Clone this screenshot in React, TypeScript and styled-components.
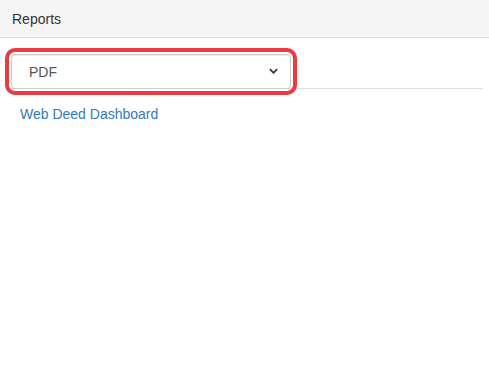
import React from "react";
import styled, { createGlobalStyle } from "styled-components";

const GlobalStyle = createGlobalStyle`
  body {
    margin: 0;
    background: #fff;
    font-family: "Liberation Sans", Arial, sans-serif;
    font-size: 14px;
    color: #333;
  }
`;

const App = () => {
  const [format, setFormat] = React.useState("PDF");

  return (
    <>
      <GlobalStyle />
      <Panel>
        <Heading>Reports</Heading>
        <Body>
          <FilterBar>
            <Highlight>
              <Select value={format} onChange={(e) => setFormat(e.target.value)}>
                <option>PDF</option>
                <option>Excel</option>
                <option>CSV</option>
              </Select>
              <Chevron viewBox="0 0 10 6" aria-hidden="true">
                <path d="M1 1 L5 5 L9 1" />
              </Chevron>
            </Highlight>
          </FilterBar>
          <ReportList>
            <ReportLink href="#">Web Deed Dashboard</ReportLink>
          </ReportList>
        </Body>
      </Panel>
    </>
  );
};

const Panel = styled.div`
  display: flex;
  flex-direction: column;
  min-height: 373px;
`;

const Heading = styled.div`
  height: 38px;
  box-sizing: border-box;
  padding: 0 12px;
  display: flex;
  align-items: center;
  background: #f5f5f5;
  border-bottom: 1px solid #ddd;
  color: #333;
`;

const Body = styled.div`
  padding: 16px 6px 0 11px;
`;

const FilterBar = styled.div`
  display: flex;
  border-bottom: 1px solid #ddd;
  height: 34px;
`;

const Highlight = styled.div`
  position: relative;
  width: 280px;
  height: 35px;
  border-radius: 4px;
  outline: 4px solid #ec3a3f;
  outline-offset: 2px;
`;

const Select = styled.select`
  appearance: none;
  width: 100%;
  height: 100%;
  box-sizing: border-box;
  padding: 0 17px;
  border: 1px solid #ccc;
  border-radius: 4px;
  background: #fff;
  font-family: "Liberation Sans", Arial, sans-serif;
  font-size: 14px;
  color: #555;
  box-shadow: inset 0 1px 1px rgba(0, 0, 0, 0.075);
`;

const Chevron = styled.svg`
  position: absolute;
  right: 13px;
  top: 14px;
  width: 9px;
  height: 6px;
  pointer-events: none;
  fill: none;
  stroke: #333;
  stroke-width: 2;
`;

const ReportList = styled.div`
  padding: 17px 9px 0;
`;

const ReportLink = styled.a`
  color: #337ab7;
  text-decoration: none;
  font-size: 14px;
`;

export default App;
